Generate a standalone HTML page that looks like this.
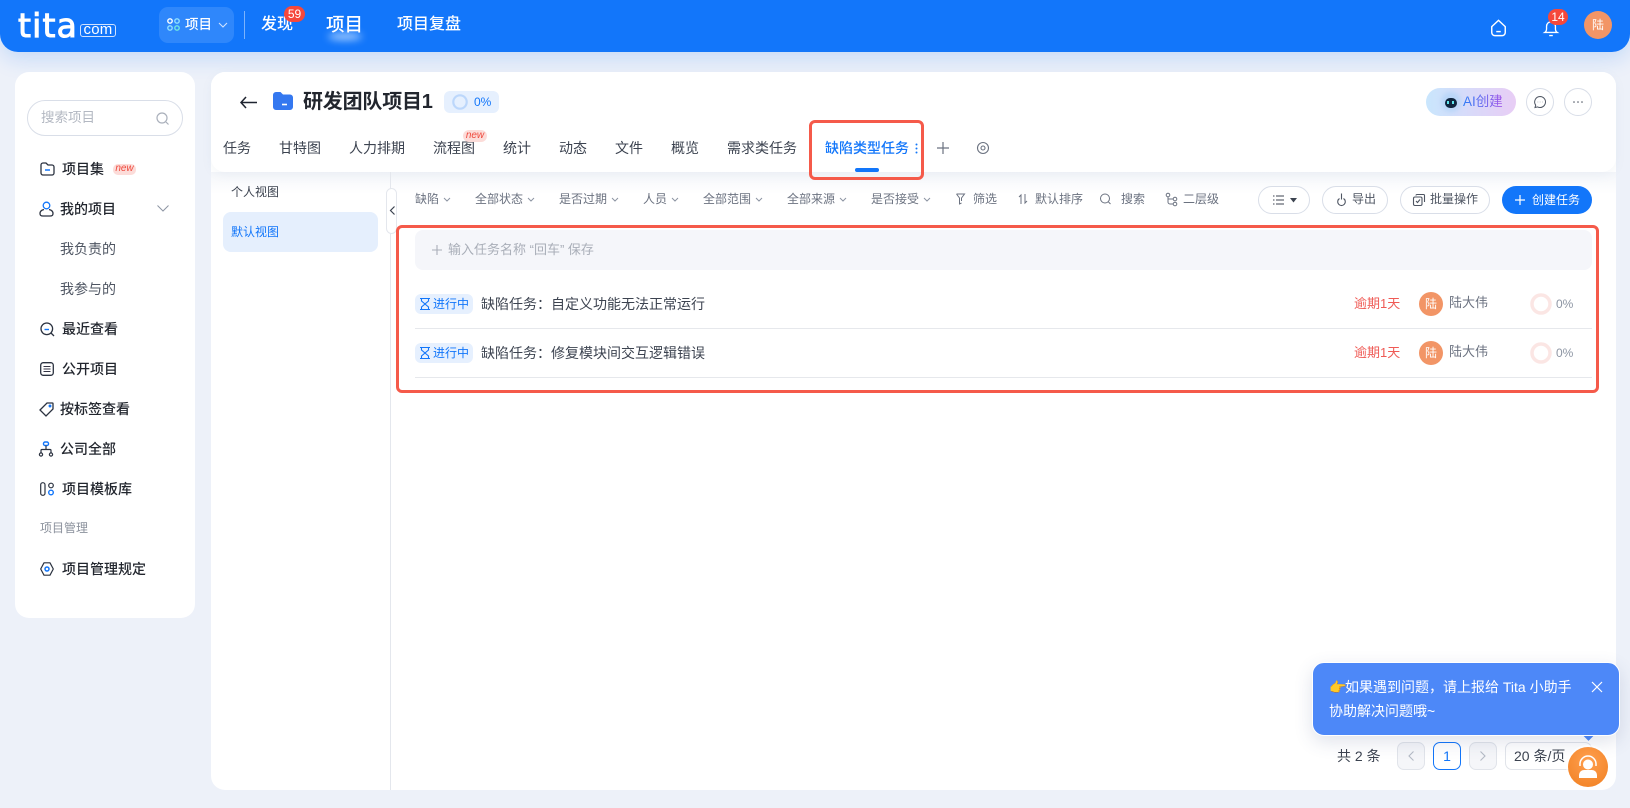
<!DOCTYPE html>
<html lang="zh"><head><meta charset="utf-8"><title>Tita</title>
<style>
*{box-sizing:border-box;margin:0;padding:0}
html,body{width:1630px;height:808px;overflow:hidden}
body{background:#edf1f9;font-family:"Liberation Sans","Noto Sans CJK SC",sans-serif;position:relative;color:#2b3240}
.a{position:absolute}
.t{position:absolute;white-space:nowrap;line-height:20px;height:20px}
svg{position:absolute;overflow:visible;fill:none}
.s{font-size:14px;font-weight:500;color:#22262e}
.tab{font-size:14px;color:#3c4350;top:138px}
.f{font-size:12px;color:#6b7280;top:189px}
.b{position:absolute;top:186px;height:28px;border:1px solid #d9dee8;border-radius:14px;background:#fff}
</style></head><body>

<!-- header -->
<div class="a" style="left:0;top:0;width:1630px;height:52px;background:#1276fa;border-radius:0 0 18px 18px;box-shadow:0 6px 22px rgba(18,118,250,.2)"></div>
<div class="t" style="left:18px;top:8px;font:400 33px/36px 'DejaVu Sans',sans-serif;height:36px;color:#fff;letter-spacing:1.200px;-webkit-text-stroke:1px #fff">tita</div>
<div class="a" style="left:80px;top:24px;width:36px;height:13px;border:1px solid #cfe2ff;border-radius:3px;color:#fff;font-size:15px;line-height:10px;text-align:center;letter-spacing:.2px">com</div>
<div class="a" style="left:159px;top:7px;width:75px;height:36px;border-radius:9px;background:#2f87fb"></div>
<svg style="left:167px;top:18px" width="13" height="13" stroke-width="1.4"><circle cx="3" cy="3" r="2.2" stroke="#fff"/><circle cx="10" cy="3" r="2.2" stroke="#8fe0ff"/><circle cx="3" cy="10" r="2.2" stroke="#8fe0ff"/><circle cx="10" cy="10" r="2.2" stroke="#6fe7e0"/></svg>
<div class="t" style="left:185px;top:15px;font-size:13.5px;color:#fff;font-weight:500">项目</div>
<svg style="left:218px;top:22px" width="10" height="6" stroke="#cfe2ff" stroke-width="1.1"><path d="M1 1l4 4 4-4"/></svg>
<div class="a" style="left:244px;top:11px;width:1px;height:28px;background:rgba(255,255,255,.45)"></div>
<div class="t" style="left:261px;top:15px;font-size:16px;color:#fff;font-weight:500">发现</div>
<div class="a" style="left:284px;top:6px;width:21px;height:16px;border-radius:8px;background:#f5483b;color:#fff;font-size:12px;line-height:16px;text-align:center">59</div>
<div class="a" style="left:328px;top:33px;width:34px;height:7px;background:#a9d0ff;border-radius:50%;filter:blur(4px)"></div>
<div class="t" style="left:326px;top:15px;font-size:18.5px;color:#fff;font-weight:500">项目</div>
<div class="t" style="left:397px;top:15px;font-size:16px;color:#fff;font-weight:500">项目复盘</div>
<svg style="left:1490px;top:19px" width="17" height="18" viewBox="0 0 18 20" stroke="#fff" stroke-width="1.600"><path d="M1.500 8.500L9 1.500l7.500 7V15a3.500 3.500 0 0 1-3.500 3.500H5A3.500 3.500 0 0 1 1.500 15z"/><path d="M6.500 14h5"/></svg>
<svg style="left:1543px;top:19px" width="16" height="18" viewBox="0 0 18 20" stroke="#fff" stroke-width="1.500"><path d="M2 15c1.500-1 2-2 2-4V8a5 5 0 0 1 10 0v3c0 2 .5 3 2 4z"/><path d="M7 18.500h4"/></svg>
<div class="a" style="left:1548px;top:9px;width:20px;height:16px;border-radius:8px;background:#f5483b;color:#fff;font-size:12px;line-height:16px;text-align:center">14</div>
<div class="a" style="left:1584px;top:11px;width:28px;height:28px;border-radius:50%;background:#f29566;color:#fff;font-size:12px;line-height:28px;text-align:center">陆</div>

<!-- sidebar -->
<div class="a" style="left:15px;top:72px;width:180px;height:546px;background:#fff;border-radius:14px"></div>
<div class="a" style="left:27px;top:100px;width:156px;height:36px;border:1px solid #d9dee8;border-radius:18px"></div>
<div class="t" style="left:41px;top:108px;font-size:13.500px;color:#b3b8c2">搜索项目</div>
<svg style="left:156px;top:112px" width="13" height="13" stroke="#aab0bb" stroke-width="1.200"><circle cx="6" cy="6" r="5"/><path d="M10 10l2.500 2.500"/></svg>

<svg style="left:40px;top:162px" width="15" height="14" stroke="#2b3240" stroke-width="1.300"><path d="M1 3a2 2 0 0 1 2-2h3l2 2h4a2 2 0 0 1 2 2v6a2 2 0 0 1-2 2H3a2 2 0 0 1-2-2z"/><path d="M5 8h5" stroke="#1276fa" stroke-width="1.500"/></svg>
<div class="t s" style="left:62px;top:159px">项目集</div>
<div class="a" style="left:113px;top:164px;width:23px;height:11px;border-radius:5px;background:#fcdcd9;color:#ef4b3f;font:italic 10px/10px 'Liberation Sans',sans-serif;text-align:center">new</div>

<svg style="left:39px;top:201px" width="15" height="16" stroke="#2b3240" stroke-width="1.300"><circle cx="7.500" cy="4.500" r="3.300" stroke="#1276fa"/><path d="M5 8.500C2.500 9 1 10.500 1 12.500 1 14.500 2 15 4 15h7c2 0 3-.5 3-2.500S12.500 9 10 8.500"/></svg>
<div class="t s" style="left:60px;top:199px">我的项目</div>
<svg style="left:157px;top:205px" width="12" height="7" stroke="#8d95a3" stroke-width="1"><path d="M.5.500l5.500 5.500L11.500.500"/></svg>
<div class="t" style="left:60px;top:239px;font-size:14px;color:#4e5562">我负责的</div>
<div class="t" style="left:60px;top:279px;font-size:14px;color:#4e5562">我参与的</div>

<svg style="left:40px;top:322px" width="15" height="15" stroke="#2b3240" stroke-width="1.300"><circle cx="6.800" cy="6.800" r="5.800"/><path d="M11 11l3 3"/><path d="M4.500 7.500h4.500" stroke="#1276fa" stroke-width="1.400"/></svg>
<div class="t s" style="left:62px;top:319px">最近查看</div>

<svg style="left:40px;top:362px" width="14" height="14" stroke="#2b3240" stroke-width="1.300"><rect x=".7" y=".7" width="12.600" height="12.600" rx="2.500"/><path d="M3.500 4.500h7M3.500 7h7M3.500 9.500h7" stroke="#334" stroke-width="1.100"/></svg>
<div class="t s" style="left:62px;top:359px">公开项目</div>

<svg style="left:39px;top:402px" width="15" height="15" stroke="#2b3240" stroke-width="1.300"><path d="M1 8L8 1h5.500a.5.500 0 0 1 .5.500V7l-7 7z"/><circle cx="11" cy="4" r=".8" stroke="#1276fa"/></svg>
<div class="t s" style="left:60px;top:399px">按标签查看</div>

<svg style="left:38px;top:441px" width="16" height="16" stroke="#2b3240" stroke-width="1.200"><rect x="5.500" y="1" width="5" height="3.500" rx="1.500" stroke="#1276fa" stroke-width="1.400"/><path d="M8 4.500v4M3 12V9.500a1 1 0 0 1 1-1h8a1 1 0 0 1 1 1V12"/><circle cx="3" cy="13.500" r="1.600"/><circle cx="13" cy="13.500" r="1.600"/></svg>
<div class="t s" style="left:60px;top:439px">公司全部</div>

<svg style="left:40px;top:482px" width="15" height="14" stroke="#2b3240" stroke-width="1.200"><rect x=".7" y=".7" width="4.300" height="12.600" rx="2.100"/><circle cx="11" cy="3.500" r="2.300"/><circle cx="11" cy="10.500" r="2.300" stroke="#1276fa" stroke-width="1.400"/></svg>
<div class="t s" style="left:62px;top:479px">项目模板库</div>

<div class="t" style="left:40px;top:518px;font-size:12px;color:#8b919c">项目管理</div>

<svg style="left:40px;top:562px" width="14" height="14" stroke="#2b3240" stroke-width="1.200"><path d="M4 .8h6L13.300 7 10 13.200H4L.7 7z" stroke-linejoin="round"/><circle cx="7" cy="7" r="2" stroke="#1276fa" stroke-width="1.500"/></svg>
<div class="t s" style="left:62px;top:559px">项目管理规定</div>

<!-- main -->
<div class="a" style="left:211px;top:72px;width:1405px;height:718px;background:#fff;border-radius:14px"></div>
<div class="a" style="left:211px;top:172px;width:1405px;height:22px;background:linear-gradient(#f4f6fa,#fff);"></div>
<div class="a" style="left:211px;top:72px;width:1405px;height:100px;background:#fff;border-radius:14px;box-shadow:0 3px 10px rgba(120,135,170,.07)"></div>

<svg style="left:240px;top:96px" width="17" height="13" stroke="#1f2430" stroke-width="1.500"><path d="M6 1L1 6.500 6 12M1 6.500h16"/></svg>
<svg style="left:273px;top:92px" width="20" height="18"><path d="M0 3a3 3 0 0 1 3-3h4.500l2.500 2.500h7a3 3 0 0 1 3 3V15a3 3 0 0 1-3 3H3a3 3 0 0 1-3-3z" fill="#3478f0"/><path d="M9 12.500h5" stroke="#fff" stroke-width="1.600"/></svg>
<div class="t" style="left:303px;top:92px;font-size:20px;font-weight:600;color:#22262e;letter-spacing:-.2px">研发团队项目1</div>
<div class="a" style="left:444px;top:91px;width:55px;height:22px;border-radius:6px;background:#e6f0fe"></div>
<svg style="left:452px;top:94px" width="16" height="16"><circle cx="8" cy="8" r="6.700" stroke="#bcd7fb" stroke-width="2.200"/></svg>
<div class="t" style="left:474px;top:92px;font-size:12px;color:#1276fa">0%</div>

<div class="t tab" style="left:223px">任务</div>
<div class="t tab" style="left:279px">甘特图</div>
<div class="t tab" style="left:349px">人力排期</div>
<div class="t tab" style="left:433px">流程图</div>
<div class="a" style="left:463px;top:130px;width:24px;height:12px;border-radius:6px;background:#fcdcd9;color:#ef4b3f;font:italic 10px/11px 'Liberation Sans',sans-serif;text-align:center">new</div>
<div class="t tab" style="left:503px">统计</div>
<div class="t tab" style="left:559px">动态</div>
<div class="t tab" style="left:615px">文件</div>
<div class="t tab" style="left:671px">概览</div>
<div class="t tab" style="left:727px">需求类任务</div>
<div class="t tab" style="left:825px;color:#1276fa;font-weight:500">缺陷类型任务</div>
<svg style="left:915px;top:143px" width="3" height="11"><circle cx="1.500" cy="1.500" r="1" fill="#1276fa"/><circle cx="1.500" cy="5.500" r="1" fill="#1276fa"/><circle cx="1.500" cy="9.500" r="1" fill="#1276fa"/></svg>
<div class="a" style="left:855px;top:168px;width:24px;height:4px;border-radius:2px;background:#1276fa"></div>
<svg style="left:937px;top:142px" width="12" height="12" stroke="#6b7280" stroke-width="1.200"><path d="M6 0v12M0 6h12"/></svg>
<svg style="left:977px;top:142px" width="12" height="12" stroke="#6b7280" stroke-width="1.100"><circle cx="6" cy="6" r="5.500"/><circle cx="6" cy="6" r="2"/></svg>

<div class="a" style="left:809px;top:120px;width:115px;height:60px;border:3px solid #f55a4a;border-radius:6px"></div>

<!-- left view panel -->
<div class="t" style="left:231px;top:182px;font-size:12px;color:#3c4350">个人视图</div>
<div class="a" style="left:223px;top:212px;width:155px;height:40px;border-radius:8px;background:#e5effd"></div>
<div class="t" style="left:231px;top:222px;font-size:12px;color:#1276fa">默认视图</div>
<div class="a" style="left:390px;top:172px;width:1px;height:618px;background:#e4e7ed"></div>
<div class="a" style="left:386px;top:188px;width:11px;height:46px;background:#fff;border:1px solid #e4e7ed;border-radius:6px"></div>
<svg style="left:390px;top:206px" width="5" height="9" stroke="#3c4350" stroke-width="1.200"><path d="M4.500.500L.5 4.500l4 4"/></svg>

<!-- filters -->
<div class="t f" style="left:415px">缺陷</div>
<div class="t f" style="left:475px">全部状态</div>
<div class="t f" style="left:559px">是否过期</div>
<div class="t f" style="left:643px">人员</div>
<div class="t f" style="left:703px">全部范围</div>
<div class="t f" style="left:787px">全部来源</div>
<div class="t f" style="left:871px">是否接受</div>
<svg style="left:0;top:0" width="1" height="1" stroke="#8d95a3" stroke-width="1">
<path d="M444 198l3 3 3-3M528 198l3 3 3-3M612 198l3 3 3-3M672 198l3 3 3-3M756 198l3 3 3-3M840 198l3 3 3-3M924 198l3 3 3-3"/>
<path d="M956.500 194h8l-3 4v3M956.500 194l3 4v6l2-1" stroke="#6b7280"/>
<path d="M1021 204v-9l-2 2M1025 194v9l2-2" stroke="#6b7280"/>
<circle cx="1105" cy="198.500" r="4.500" stroke="#6b7280"/><path d="M1108.500 202l2 2" stroke="#6b7280"/>
<circle cx="1168" cy="195" r="1.800" stroke="#6b7280"/><circle cx="1175" cy="199" r="1.800" stroke="#6b7280"/><circle cx="1175" cy="204" r="1.800" stroke="#6b7280"/><path d="M1168 197v5a2 2 0 0 0 2 2h3M1168 199h5" stroke="#6b7280"/>
</svg>
<div class="t f" style="left:973px">筛选</div>
<div class="t f" style="left:1035px">默认排序</div>
<div class="t f" style="left:1121px">搜索</div>
<div class="t f" style="left:1183px">二层级</div>

<div class="b" style="left:1258px;width:52px"></div>
<svg style="left:1273px;top:195px" width="24" height="10" stroke="#3c4350" stroke-width="1.100"><path d="M0 1h1.500M3 1h8M0 5h1.500M3 5h8M0 9h1.500M3 9h8"/><path d="M17 3h7l-3.500 4.500z" fill="#3c4350" stroke="none"/></svg>
<div class="b" style="left:1322px;width:66px"></div>
<svg style="left:1336px;top:193px" width="11" height="13" stroke="#4e5562" stroke-width="1.100"><path d="M3.500 5.500A3.800 3.800 0 1 0 7.500 5.500M5.500.500v6"/></svg>
<div class="t f" style="left:1352px;color:#4e5562">导出</div>
<div class="b" style="left:1400px;width:90px"></div>
<svg style="left:1413px;top:194px" width="12" height="12" stroke="#4e5562" stroke-width="1.100"><rect x=".5" y="3" width="8.500" height="8.500" rx="1.500"/><path d="M3 1.500a1 1 0 0 1 1-1h6.500a1 1 0 0 1 1 1V8M3 7l1.500 1.500L7 5.500"/></svg>
<div class="t f" style="left:1430px;color:#4e5562">批量操作</div>
<div class="a" style="left:1502px;top:186px;width:90px;height:28px;border-radius:14px;background:#1276fa"></div>
<svg style="left:1515px;top:195px" width="10" height="10" stroke="#fff" stroke-width="1.200"><path d="M5 0v10M0 5h10"/></svg>
<div class="t" style="left:1532px;top:190px;font-size:12px;color:#fff">创建任务</div>

<div class="a" style="left:1426px;top:88px;width:90px;height:28px;border-radius:14px;background:linear-gradient(90deg,#c9e6fd,#e8cdf5)"></div>
<div class="a" style="left:1441px;top:92px;width:20px;height:20px;border-radius:50%;background:#b9d6f8;filter:blur(2px)"></div>
<div class="a" style="left:1445px;top:98px;width:12px;height:10px;border-radius:5px;background:#10263f"></div>
<div class="a" style="left:1447px;top:101px;width:2px;height:3px;background:#5fe6ee"></div>
<div class="a" style="left:1452px;top:101px;width:2px;height:3px;background:#5fe6ee"></div>
<div class="t" style="left:1463px;top:92px;font-size:13.500px;background:linear-gradient(90deg,#2d7cf6,#a455e8);-webkit-background-clip:text;background-clip:text;color:transparent">AI创建</div>
<div class="a" style="left:1526px;top:88px;width:28px;height:28px;border-radius:50%;border:1px solid #d9dee8"></div>
<svg style="left:1534px;top:96px" width="12" height="12" stroke="#4e5562" stroke-width="1"><path d="M6 .5a5.500 5.500 0 1 1-2.500 10.400L1 11.500l.7-2.300A5.500 5.500 0 0 1 6 .5z"/><path d="M3.800 6h.3M5.900 6h.3M8 6h.3"/></svg>
<div class="a" style="left:1564px;top:88px;width:28px;height:28px;border-radius:50%;border:1px solid #d9dee8"></div>
<svg style="left:1573px;top:101px" width="10" height="3" stroke="none"><circle cx="1" cy="1" r=".8" fill="#4e5562"/><circle cx="5" cy="1" r=".8" fill="#4e5562"/><circle cx="9" cy="1" r=".8" fill="#4e5562"/></svg>

<!-- task list -->
<div class="a" style="left:415px;top:230px;width:1177px;height:40px;border-radius:8px;background:#f5f6fa"></div>
<svg style="left:432px;top:245px" width="10" height="10" stroke="#a9aeb8" stroke-width="1.100"><path d="M5 0v10M0 5h10"/></svg>
<div class="t" style="left:448px;top:240px;font-size:13px;color:#a9aeb8">输入任务名称 “回车” 保存</div>

<div class="a" style="left:415px;top:294px;width:58px;height:20px;border-radius:6px;background:#e6f0fe"></div>
<svg style="left:420px;top:298px" width="10" height="12" stroke="#1276fa" stroke-width="1.100"><path d="M0 .5h10M0 11.500h10M1.500.500V3L5 6 1.500 9v2.500M8.500.500V3L5 6 8.500 9v2.500"/></svg>
<div class="t" style="left:433px;top:294px;font-size:12px;color:#1276fa">进行中</div>
<div class="t" style="left:481px;top:294px;font-size:14px;color:#3c4350">缺陷任务：自定义功能无法正常运行</div>
<div class="t" style="left:1354px;top:294px;font-size:13px;color:#ef5a55">逾期1天</div>
<div class="a" style="left:1419px;top:292px;width:24px;height:24px;border-radius:50%;background:#f29566;color:#fff;font-size:12px;line-height:24px;text-align:center">陆</div>
<div class="t" style="left:1449px;top:293px;font-size:13px;color:#6b7280">陆大伟</div>
<svg style="left:1530px;top:293px" width="22" height="22"><circle cx="11" cy="11" r="9" stroke="#fbe6e4" stroke-width="3.500"/></svg>
<div class="t" style="left:1556px;top:294px;font-size:12px;color:#8d95a3">0%</div>
<div class="a" style="left:415px;top:328px;width:1177px;height:1px;background:#e6e8ec"></div>

<div class="a" style="left:415px;top:343px;width:58px;height:20px;border-radius:6px;background:#e6f0fe"></div>
<svg style="left:420px;top:347px" width="10" height="12" stroke="#1276fa" stroke-width="1.100"><path d="M0 .5h10M0 11.500h10M1.500.500V3L5 6 1.500 9v2.500M8.500.500V3L5 6 8.500 9v2.500"/></svg>
<div class="t" style="left:433px;top:343px;font-size:12px;color:#1276fa">进行中</div>
<div class="t" style="left:481px;top:343px;font-size:14px;color:#3c4350">缺陷任务：修复模块间交互逻辑错误</div>
<div class="t" style="left:1354px;top:343px;font-size:13px;color:#ef5a55">逾期1天</div>
<div class="a" style="left:1419px;top:341px;width:24px;height:24px;border-radius:50%;background:#f29566;color:#fff;font-size:12px;line-height:24px;text-align:center">陆</div>
<div class="t" style="left:1449px;top:342px;font-size:13px;color:#6b7280">陆大伟</div>
<svg style="left:1530px;top:342px" width="22" height="22"><circle cx="11" cy="11" r="9" stroke="#fbe6e4" stroke-width="3.500"/></svg>
<div class="t" style="left:1556px;top:343px;font-size:12px;color:#8d95a3">0%</div>
<div class="a" style="left:415px;top:377px;width:1177px;height:1px;background:#e6e8ec"></div>

<div class="a" style="left:396px;top:225px;width:1203px;height:168px;border:3px solid #f55a4a;border-radius:6px"></div>

<!-- pagination -->
<div class="t" style="left:1337px;top:746px;font-size:14px;color:#3c4350">共 2 条</div>
<div class="a" style="left:1397px;top:742px;width:28px;height:28px;border:1px solid #e1e4ea;border-radius:7px;background:#f5f6f9"></div>
<svg style="left:1408px;top:751px" width="6" height="10" stroke="#b4bac5" stroke-width="1.100"><path d="M5.500.500L1 5l4.500 4.500"/></svg>
<div class="a" style="left:1433px;top:742px;width:28px;height:28px;border:1px solid #1276fa;border-radius:7px;color:#1276fa;font-size:14px;line-height:26px;text-align:center">1</div>
<div class="a" style="left:1469px;top:742px;width:28px;height:28px;border:1px solid #e1e4ea;border-radius:7px;background:#f5f6f9"></div>
<svg style="left:1480px;top:751px" width="6" height="10" stroke="#b4bac5" stroke-width="1.100"><path d="M.5.500L5 5 .5 9.500"/></svg>
<div class="a" style="left:1505px;top:742px;width:87px;height:28px;border:1px solid #e1e4ea;border-radius:7px"></div>
<div class="t" style="left:1514px;top:746px;font-size:14px;color:#3c4350">20 条/页</div>

<!-- popup -->
<div class="a" style="left:1584px;top:730px;width:9px;height:9px;background:#4d88f8;transform:rotate(45deg)"></div>
<div class="a" style="left:1312px;top:662px;width:308px;height:74px;border-radius:12px;background:#4d88f8;border:1px solid #fff;box-shadow:0 6px 18px rgba(60,80,130,.16)"></div>
<div class="t" style="left:1329px;top:677px;font-size:14px;color:#fff"><span style="display:inline-block;width:16px;font-size:14px;color:#f0a53a">👉</span>如果遇到问题，请上报给 Tita 小助手</div>
<div class="t" style="left:1329px;top:701px;font-size:14px;color:#fff">协助解决问题哦~</div>
<svg style="left:1592px;top:682px" width="10" height="10" stroke="#fff" stroke-width="1.200"><path d="M0 0l10 10M10 0L0 10"/></svg>

<div class="a" style="left:1568px;top:747px;width:40px;height:40px;border-radius:50%;background:radial-gradient(circle at 50% 35%,#ff9f4f,#f07f20);box-shadow:0 0 0 2px rgba(255,255,255,.6)"></div>
<svg style="left:1577px;top:755px" width="22" height="24"><path d="M3 11V9a8 8 0 0 1 16 0v2" stroke="#fff" stroke-width="1.500"/><circle cx="11" cy="9.500" r="5" fill="#fff"/><path d="M2 23v-3a5 5 0 0 1 5-5h8a5 5 0 0 1 5 5v3z" fill="#fff"/></svg>
</body></html>
